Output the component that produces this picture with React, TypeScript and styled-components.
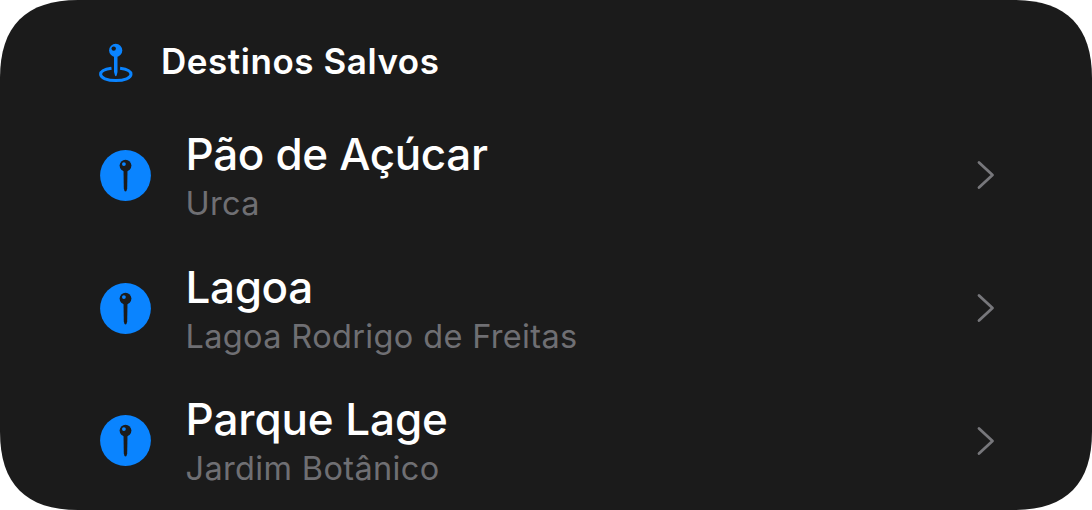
import styled, { createGlobalStyle } from "styled-components";

const places = [
  { name: "Pão de Açúcar", area: "Urca", tracking: -0.35 },
  { name: "Lagoa", area: "Lagoa Rodrigo de Freitas", tracking: -0.35 },
  { name: "Parque Lage", area: "Jardim Botânico", tracking: -0.1 },
];

export default function App() {
  return (
    <>
      <GlobalStyle />
      <Card>
        <Header>
          <MapPin viewBox="0 0 36 42">
            <path
              d="M13.5 27.2 C7 28 2.6 30.3 2.6 33.3 C2.6 36.9 9.2 39.6 17.8 39.6 C26.4 39.6 33 36.9 33 33.3 C33 30.3 28.6 28 22.1 27.2"
              fill="none"
              stroke="#0a84ff"
              strokeWidth="3"
            />
            <path
              d="M16 14 H19.5 V31 L18.6 34.6 Q17.8 36 17 34.6 L16 31 Z"
              fill="#0a84ff"
            />
            <circle cx="17.7" cy="9.4" r="6.6" fill="#0a84ff" />
            <circle cx="15.7" cy="7.6" r="2.2" fill="#1b1b1b" />
          </MapPin>
          <Heading>Destinos Salvos</Heading>
        </Header>
        {places.map((place) => (
          <Row key={place.name}>
            <Badge viewBox="0 0 51 51">
              <circle cx="25.5" cy="25.5" r="25.4" fill="#0a84ff" />
              <path
                d="M23.5 20 H27.5 L27.2 38.5 Q26.8 41.4 25.5 41.4 Q24.2 41.4 23.8 38.5 Z"
                fill="#1b1b1b"
              />
              <circle cx="25.5" cy="15.6" r="5.9" fill="#1b1b1b" />
              <circle cx="23.9" cy="14.1" r="1.9" fill="#0a84ff" />
            </Badge>
            <Labels>
              <Name $tracking={place.tracking}>{place.name}</Name>
              <Area>{place.area}</Area>
            </Labels>
            <Chevron viewBox="0 0 20 32">
              <path d="M3 3.5 L16.5 16 L3 28.5" />
            </Chevron>
          </Row>
        ))}
      </Card>
    </>
  );
}

const GlobalStyle = createGlobalStyle`
  * {
    box-sizing: border-box;
  }
  body {
    margin: 0;
    background: #fff;
    font-family: Inter, sans-serif;
  }
`;

// clip-path gives the corners a smoother curve than border-radius
const Card = styled.main`
  width: 1092px;
  height: 510px;
  padding: 35px 96px 0 98px;
  background: #1b1b1b;
  clip-path: path(
    "M0 78 C0 26 26 0 78 0 H1014 C1066 0 1092 26 1092 78 V432 C1092 484 1066 510 1014 510 H78 C26 510 0 484 0 432 Z"
  );
`;

const Header = styled.header`
  display: flex;
  align-items: center;
  gap: 27px;
  height: 54px;
  margin-bottom: 20px;
`;

const MapPin = styled.svg`
  width: 36px;
  height: 42px;
`;

const Heading = styled.h1`
  margin: 0 0 2px;
  font-size: 35px;
  font-weight: 600;
  letter-spacing: 0.55px;
  color: #fff;
`;

const Row = styled.div`
  display: flex;
  align-items: center;
  height: 132.7px;
`;

const Badge = styled.svg`
  width: 51px;
  height: 51px;
  margin: 0 34.5px 0 2px;
`;

const Labels = styled.div`
  flex: 1;
  padding-top: 3.4px;
`;

const Name = styled.div<{ $tracking: number }>`
  font-size: 44px;
  font-weight: 500;
  line-height: 52px;
  letter-spacing: ${(props) => props.$tracking}px;
  color: #fff;
`;

const Area = styled.div`
  margin-bottom: -2px;
  font-size: 32.5px;
  line-height: 48px;
  letter-spacing: 0.35px;
  color: #6f6f73;
`;

const Chevron = styled.svg`
  width: 20px;
  height: 32px;
  fill: none;
  stroke: #77777b;
  stroke-width: 2.8;
  stroke-linecap: round;
  stroke-linejoin: round;
`;
